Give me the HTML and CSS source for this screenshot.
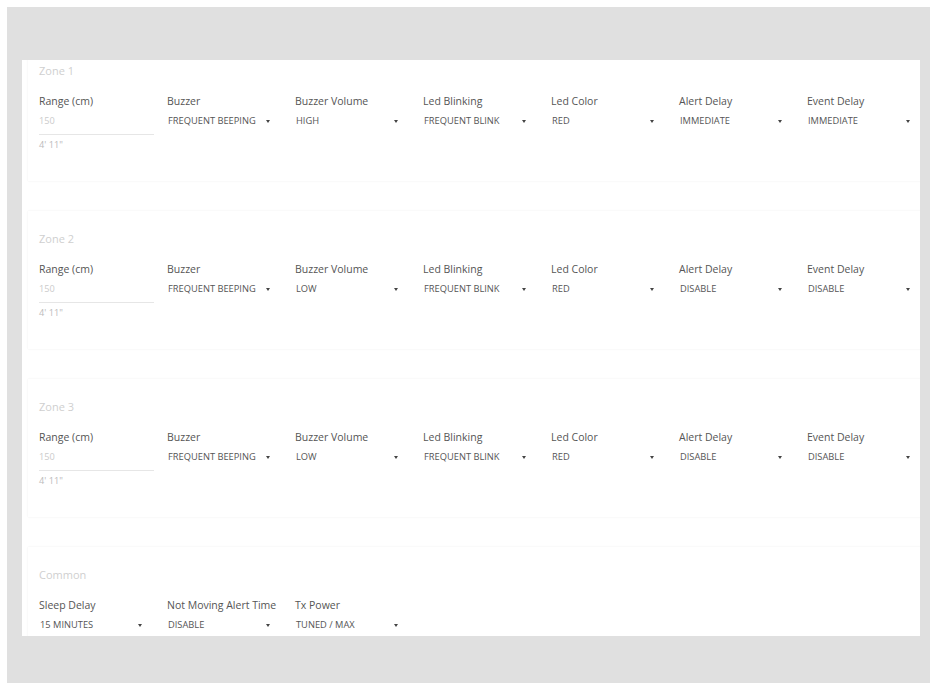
FILE: index.html
```html
<!DOCTYPE html>
<html>
<head>
<meta charset="utf-8">
<link rel="stylesheet" href="styles.css">
</head>
<body>
<div class="frame">
  <div class="panel">
    <div class="scroll">

      <section class="card">
        <div class="title">Zone 1</div>
        <div class="fields">
          <div class="field">
            <div class="label">Range (cm)</div>
            <div class="input">150</div>
            <div class="sub">4' 11"</div>
          </div>
          <div class="field"><div class="label">Buzzer</div><div class="select"><span>FREQUENT BEEPING</span><i class="caret"></i></div></div>
          <div class="field"><div class="label">Buzzer Volume</div><div class="select"><span>HIGH</span><i class="caret"></i></div></div>
          <div class="field"><div class="label">Led Blinking</div><div class="select"><span>FREQUENT BLINK</span><i class="caret"></i></div></div>
          <div class="field"><div class="label">Led Color</div><div class="select"><span>RED</span><i class="caret"></i></div></div>
          <div class="field"><div class="label">Alert Delay</div><div class="select"><span>IMMEDIATE</span><i class="caret"></i></div></div>
          <div class="field"><div class="label">Event Delay</div><div class="select"><span>IMMEDIATE</span><i class="caret"></i></div></div>
        </div>
      </section>

      <section class="card">
        <div class="title">Zone 2</div>
        <div class="fields">
          <div class="field">
            <div class="label">Range (cm)</div>
            <div class="input">150</div>
            <div class="sub">4' 11"</div>
          </div>
          <div class="field"><div class="label">Buzzer</div><div class="select"><span>FREQUENT BEEPING</span><i class="caret"></i></div></div>
          <div class="field"><div class="label">Buzzer Volume</div><div class="select"><span>LOW</span><i class="caret"></i></div></div>
          <div class="field"><div class="label">Led Blinking</div><div class="select"><span>FREQUENT BLINK</span><i class="caret"></i></div></div>
          <div class="field"><div class="label">Led Color</div><div class="select"><span>RED</span><i class="caret"></i></div></div>
          <div class="field"><div class="label">Alert Delay</div><div class="select"><span>DISABLE</span><i class="caret"></i></div></div>
          <div class="field"><div class="label">Event Delay</div><div class="select"><span>DISABLE</span><i class="caret"></i></div></div>
        </div>
      </section>

      <section class="card">
        <div class="title">Zone 3</div>
        <div class="fields">
          <div class="field">
            <div class="label">Range (cm)</div>
            <div class="input">150</div>
            <div class="sub">4' 11"</div>
          </div>
          <div class="field"><div class="label">Buzzer</div><div class="select"><span>FREQUENT BEEPING</span><i class="caret"></i></div></div>
          <div class="field"><div class="label">Buzzer Volume</div><div class="select"><span>LOW</span><i class="caret"></i></div></div>
          <div class="field"><div class="label">Led Blinking</div><div class="select"><span>FREQUENT BLINK</span><i class="caret"></i></div></div>
          <div class="field"><div class="label">Led Color</div><div class="select"><span>RED</span><i class="caret"></i></div></div>
          <div class="field"><div class="label">Alert Delay</div><div class="select"><span>DISABLE</span><i class="caret"></i></div></div>
          <div class="field"><div class="label">Event Delay</div><div class="select"><span>DISABLE</span><i class="caret"></i></div></div>
        </div>
      </section>

      <section class="card">
        <div class="title">Common</div>
        <div class="fields">
          <div class="field"><div class="label">Sleep Delay</div><div class="select"><span>15 MINUTES</span><i class="caret"></i></div></div>
          <div class="field"><div class="label">Not Moving Alert Time</div><div class="select"><span>DISABLE</span><i class="caret"></i></div></div>
          <div class="field"><div class="label">Tx Power</div><div class="select"><span>TUNED / MAX</span><i class="caret"></i></div></div>
        </div>
      </section>

    </div>
  </div>
</div>
</body>
</html>
```

FILE: styles.css
```css
html, body {
  margin: 0;
  padding: 0;
  background: #ffffff;
}

body {
  font-family: "Open Sans", "Liberation Sans", sans-serif;
  color: #555;
}

.frame {
  margin: 7px 6px 0 7px;
  height: 676px;
  box-sizing: border-box;
  background: #e0e0e0;
  padding: 53px 10px 0 15px;
}

.panel {
  background: #ffffff;
  height: 576px;
  overflow: hidden;
}

.scroll {
  margin-top: -17px;
}

.card {
  margin: 0 0 30px 6px;
  height: 138px;
  box-sizing: border-box;
  padding: 21px 0 0 11px;
  background: #fff;
  box-shadow: 0 0 2px rgba(0, 0, 0, 0.07);
  width: 920px;
}

.title {
  font-size: 11px;
  line-height: 14px;
  color: #cfcfcf;
  margin-bottom: 16px;
}

.fields {
  display: grid;
  grid-template-columns: repeat(7, 116px);
  column-gap: 12px;
}

.label {
  font-size: 10.5px;
  line-height: 14px;
  color: #555;
  white-space: nowrap;
}

.input {
  margin-top: 6px;
  font-size: 9.2px;
  line-height: 14px;
  color: #cccccc;
  padding-bottom: 6px;
  border-bottom: 1px solid #e6e6e6;
  width: 115px;
}

.sub {
  margin-top: 3px;
  font-size: 9.2px;
  line-height: 14px;
  color: #bbbbbb;
}

.select {
  margin-top: 6px;
  display: flex;
  align-items: center;
  justify-content: space-between;
  padding-right: 13px;
  font-size: 9.3px;
  line-height: 14px;
  color: #555;
  white-space: nowrap;
}

.select span {
  padding-left: 1px;
}

.caret {
  display: block;
  flex: none;
  width: 0;
  height: 0;
  border-left: 2.5px solid transparent;
  border-right: 2.5px solid transparent;
  border-top: 3px solid #444;
}
```
